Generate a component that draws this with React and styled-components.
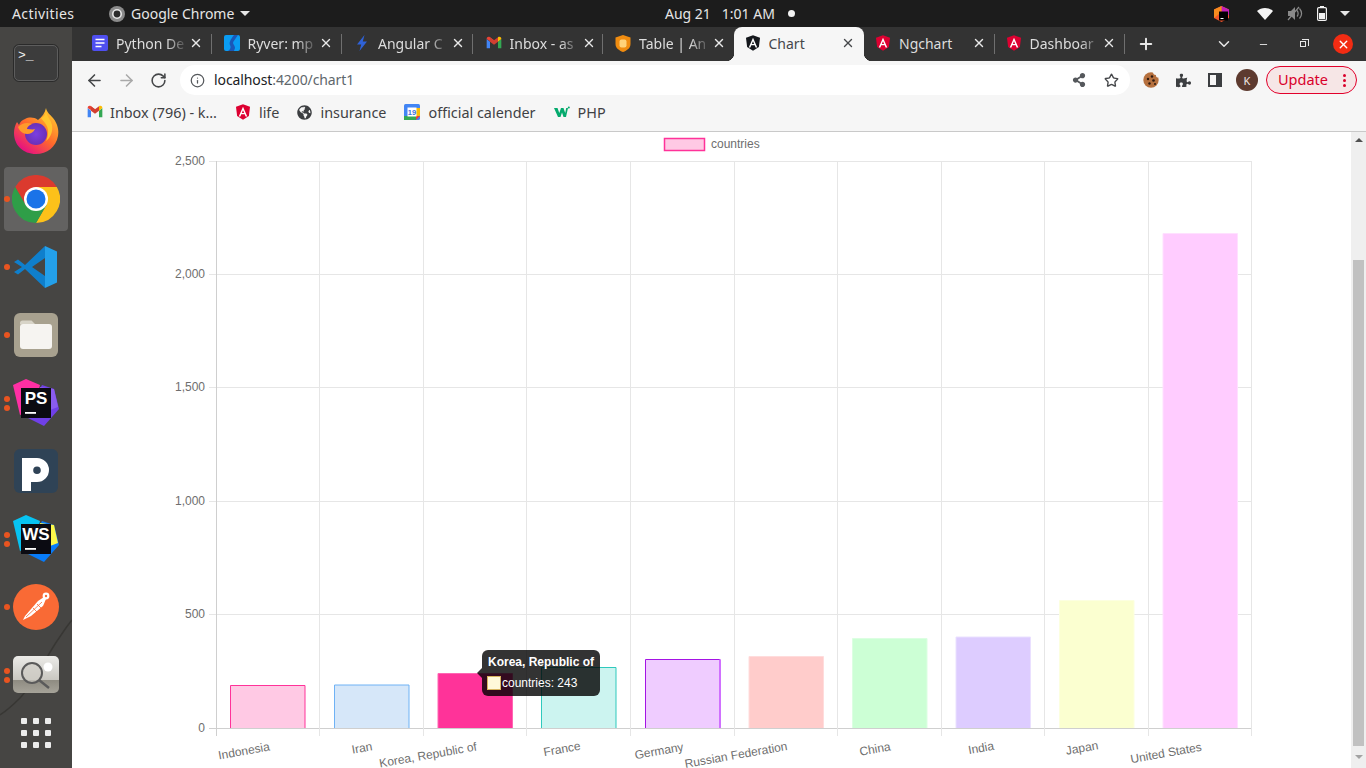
import React from 'react';
import styled, { createGlobalStyle } from 'styled-components';
import { ArrowLeft, ArrowRight, RotateCw, Info, Star, X, Plus, ChevronDown, Minus } from 'lucide-react';
import { FaGlobeAmericas, FaPuzzlePiece, FaShareAlt } from 'react-icons/fa';

const Global = createGlobalStyle`
  html, body { margin: 0; padding: 0; height: 100%; overflow: hidden; background: #fff; }
  * { box-sizing: border-box; }
  body { font-family: "Noto Sans", sans-serif; }
`;

const Screen = styled.div`
  width: 1366px;
  height: 768px;
  display: flex;
  flex-direction: column;
  overflow: hidden;
`;

/* gnome top bar */
const TopBar = styled.div`
  height: 27px;
  flex: none;
  background: #1c1c1c;
  color: #e6e6e6;
  display: grid;
  grid-template-columns: 97px 556px 200px 1fr;
  align-items: center;
  padding-left: 12px;
  font-size: 14px;
`;
const TopItem = styled.div`
  display: flex;
  align-items: center;
  gap: ${(p) => p.$gap || 0}px;
  letter-spacing: ${(p) => p.$track || 0}px;
  white-space: nowrap;
`;
const TopTray = styled.div`
  display: flex;
  align-items: center;
  padding-left: 348px;
`;
const TrayIcon = styled.span`
  display: flex;
  width: ${(p) => p.$w}px;
  margin-left: ${(p) => p.$ml || 0}px;
  justify-content: center;
`;
const Caret = styled.span`
  width: 0;
  height: 0;
  border-left: 5px solid transparent;
  border-right: 5px solid transparent;
  border-top: 5px solid #e6e6e6;
`;
const StatusDot = styled.span`
  width: 7px;
  height: 7px;
  border-radius: 50%;
  background: #f2f2f2;
  margin-left: 13px;
`;

const Body = styled.div`
  flex: 1;
  display: flex;
  min-height: 0;
`;

/* left dock */
const Dock = styled.div`
  position: relative;
  width: 72px;
  flex: none;
  background: #464543;
  padding-top: 2px;
  display: flex;
  flex-direction: column;
  overflow: hidden;
`;
const Wallpaper = styled.svg`
  position: absolute;
  left: 0;
  top: 0;
`;
const DockSlot = styled.div`
  position: relative;
  height: ${(p) => p.$h || 68}px;
  flex: none;
  display: flex;
  align-items: center;
  justify-content: center;
`;
const DockIcon = styled.span`
  position: relative;
  display: flex;
`;
const ActiveTile = styled.div`
  position: absolute;
  left: 4px;
  right: 4px;
  top: 2px;
  bottom: 2px;
  background: rgba(255, 255, 255, 0.16);
  border-radius: 4px;
`;
const Dots = styled.div`
  position: absolute;
  left: 4px;
  top: 0;
  bottom: 0;
  display: flex;
  flex-direction: column;
  justify-content: center;
  gap: 3px;
`;
const Dot = styled.span`
  width: 6px;
  height: 6px;
  border-radius: 50%;
  background: #e95420;
`;

const Browser = styled.div`
  flex: 1;
  min-width: 0;
  display: flex;
  flex-direction: column;
`;

/* tab strip */
const TabStrip = styled.div`
  height: 34px;
  flex: none;
  background: #333333;
  display: flex;
  padding-left: 9px;
`;
const Tab = styled.div`
  position: relative;
  width: 130.5px;
  flex: none;
  display: flex;
  align-items: center;
  padding: 0 ${(p) => p.$pr || 9}px 2px ${(p) => p.$pl || 11}px;
  gap: 8px;
  font-size: 14px;
  color: ${(p) => (p.$active ? '#45474a' : '#dddddd')};
  background: ${(p) => (p.$active ? '#f6f6f6' : 'transparent')};
  border-radius: ${(p) => (p.$active ? '8px 8px 0 0' : '0')};
  &::after {
    content: '';
    display: ${(p) => (p.$sep ? 'block' : 'none')};
    position: absolute;
    right: 0;
    top: 7px;
    height: 20px;
    width: 1px;
    background: #6f6f6f;
  }
`;
const Flare = styled.span`
  position: absolute;
  bottom: 0;
  ${(p) => (p.$side === 'left' ? 'left: -8px;' : 'right: -8px;')}
  width: 8px;
  height: 8px;
  background: radial-gradient(circle at ${(p) => (p.$side === 'left' ? '0 0' : '100% 0')}, transparent 8px, #f6f6f6 8.5px);
`;
const TabTitle = styled.span`
  flex: 1;
  min-width: 0;
  margin-right: -7px;
  overflow: hidden;
  white-space: nowrap;
  -webkit-mask-image: ${(p) => (p.$fade ? 'linear-gradient(to right, #000 70%, transparent 100%)' : 'none')};
  mask-image: ${(p) => (p.$fade ? 'linear-gradient(to right, #000 70%, transparent 100%)' : 'none')};
`;
const StripButton = styled.span`
  position: absolute;
  top: 0;
  height: 34px;
  left: ${(p) => p.$x}px;
  width: 30px;
  margin-left: -15px;
  display: flex;
  align-items: center;
  justify-content: center;
  color: #e8e8e8;
`;
const StripControls = styled.div`
  position: relative;
  flex: 1;
`;
const CloseDot = styled.span`
  width: 20px;
  height: 20px;
  border-radius: 50%;
  background: #f22c13;
  display: flex;
  align-items: center;
  justify-content: center;
  color: #fff;
`;
const RestoreIcon = styled.span`
  position: relative;
  width: 6px;
  height: 6px;
  border: 1px solid #e8e8e8;
  &::before {
    content: '';
    position: absolute;
    left: 0px;
    top: -3px;
    width: 6px;
    height: 6px;
    border: 1px solid #e8e8e8;
    border-left: 0;
    border-bottom: 0;
    transform: translate(1px, 0);
  }
`;

/* toolbar */
const Toolbar = styled.div`
  height: 34px;
  flex: none;
  background: #f6f6f6;
  display: flex;
  align-items: flex-start;
  padding-top: 4px;
`;
const NavButton = styled.span`
  width: 32px;
  height: 30px;
  flex: none;
  display: flex;
  align-items: center;
  justify-content: center;
  color: ${(p) => (p.$off ? '#a9a9a9' : '#444648')};
`;
const NavGroup = styled.div`
  display: flex;
  padding-left: 6px;
  padding-bottom: 1px;
  width: 108px;
`;
const Omnibox = styled.div`
  width: 950px;
  height: 30px;
  flex: none;
  background: #fff;
  border-radius: 15px;
  display: flex;
  align-items: center;
  padding: 0 3px 0 10px;
  font-size: 14px;
  color: #202124;
`;
const Url = styled.span`
  margin-left: 9px;
  margin-bottom: 2px;
  flex: 1;
  letter-spacing: -0.1px;
  & > em { font-style: normal; color: #60676c; }
`;
const Actions = styled.div`
  display: flex;
  align-items: center;
  width: 227px;
  height: 30px;
  padding-left: 5px;
`;
const Avatar = styled.span`
  width: 22px;
  height: 22px;
  border-radius: 50%;
  background: #5d3a2f;
  color: #f0e8e4;
  font-size: 11px;
  display: flex;
  align-items: center;
  justify-content: center;
  margin: 0 8px 0 5px;
`;
const UpdatePill = styled.span`
  width: 91px;
  height: 28px;
  border: 1px solid #e2002b;
  border-radius: 14px;
  background: #f6e6e6;
  color: #d9002b;
  font-size: 14.5px;
  display: flex;
  align-items: center;
  padding: 0 0 2px 11px;
  gap: 15px;
`;
const MoreDots = styled.span`
  display: flex;
  flex-direction: column;
  gap: 2px;
  margin-top: 2px;
  & > i { width: 3px; height: 3px; border-radius: 50%; background: #d9002b; display: block; }
`;

/* bookmarks */
const Bookmarks = styled.div`
  height: 37px;
  flex: none;
  background: #f6f6f6;
  border-bottom: 1px solid #c9c9c9;
  display: flex;
  align-items: center;
  padding: 0 0 2px 15px;
  gap: 18px;
  font-size: 14.4px;
  color: #3f4144;
`;
const Bookmark = styled.span`
  display: flex;
  align-items: center;
  gap: ${(p) => p.$gap || 8}px;
  white-space: nowrap;
`;

/* page */
const Page = styled.div`
  position: relative;
  flex: 1;
  min-height: 0;
  display: flex;
  background: #fff;
`;
const ChartArea = styled.div`
  flex: 1;
  min-width: 0;
`;
const ChartSvg = styled.svg`
  display: block;
`;
const Tooltip = styled.div`
  position: absolute;
  left: 410px;
  top: 518px;
  width: 118px;
  height: 46px;
  background: rgba(0, 0, 0, 0.8);
  border-radius: 6px;
  color: #fff;
  font-family: "Liberation Sans", Arial, sans-serif;
  font-size: 12px;
  padding: 6px;
  &::before {
    content: '';
    position: absolute;
    left: -5px;
    top: 18px;
    border-top: 5px solid transparent;
    border-bottom: 5px solid transparent;
    border-right: 5px solid rgba(0, 0, 0, 0.8);
  }
`;
const TipTitle = styled.div`
  font-weight: bold;
  line-height: 12px;
  margin-bottom: 8px;
  white-space: nowrap;
`;
const TipRow = styled.div`
  display: flex;
  align-items: center;
  line-height: 14px;
  white-space: nowrap;
  gap: 1px;
  margin-left: -1px;
`;
const TipSwatch = styled.span`
  width: 14px;
  height: 14px;
  background: #fff8d9;
  border: 1px solid #d8b45e;
`;
const ScrollBar = styled.div`
  width: 15px;
  flex: none;
  background: #efefef;
  display: flex;
  flex-direction: column;
  align-items: center;
  padding-top: 6px;
`;
const ScrollArrow = styled.span`
  width: 0;
  height: 0;
  border-left: 4px solid transparent;
  border-right: 4px solid transparent;
  ${(p) => (p.$down ? 'border-top: 4px solid #a3a3a3; margin-top: 9px;' : 'border-bottom: 4px solid #505050;')}
`;
const ScrollThumb = styled.span`
  width: 11px;
  height: 486px;
  margin-top: 118px;
  background: #c1c1c1;
`;

/* ---- icons ---- */
const AngularShield = ({ bg = '#dd0031', size = 16 }) => (
  <svg width={size} height={size} viewBox="0 0 24 24">
    <path d="M12 .5 1.5 4.2l1.7 13.9L12 23.5l8.8-5.4 1.7-13.9z" fill={bg} />
    <path fillRule="evenodd" d="M12 4 5.6 18.6h2.500l1.300-3.200h5.200l1.300 3.200h2.500zm-1.700 9.400L12 9.200l1.700 4.200z" fill="#fff" />
  </svg>
);
const GmailIcon = ({ size = 16 }) => (
  <svg width={size} height={size} viewBox="0 0 24 24">
    <path d="M1 6v14h5V10z" fill="#4285f4" />
    <path d="M18 10v10h5V6z" fill="#34a853" />
    <path d="M1 6c0-3 3-4 5-2.500l6 4.500v5L1 6z" fill="#ea4335" />
    <path d="M6 3.500 12 8l6-4.500V10l-6 4.500L6 10z" fill="#d23f31" />
    <path d="M18 3.500c2-1.500 5-.5 5 2.500l-5 4z" fill="#fbbc04" />
  </svg>
);
const DocsIcon = () => (
  <svg width="16" height="16" viewBox="0 0 16 16">
    <rect width="16" height="16" rx="2" fill="#4f4ff0" />
    <path d="M3.500 4.500h9M3.500 8h9M3.500 11.500h6" stroke="#fff" strokeWidth="1.500" />
  </svg>
);
const RyverIcon = () => (
  <svg width="16" height="16" viewBox="0 0 16 16">
    <rect width="16" height="16" rx="2" fill="#0a9cf2" />
    <path d="M10 0h4l-4.500 6.500C8 9 11 10 11 13l-1 3H4c3-2 3-4 2-6C5 8 6 5 10 0z" fill="#1a57b8" />
  </svg>
);
const BoltIcon = () => (
  <svg width="16" height="16" viewBox="0 0 16 16">
    <path d="M10.500 0 3 9.500h4.200L5.500 16 13 6.500H8.800z" fill="#2f62d8" />
  </svg>
);
const TableShield = () => (
  <svg width="16" height="17" viewBox="0 0 16 17">
    <path d="M8 0 15.500 2.500V9c0 4-3.500 6.500-7.500 8C4 15.500.5 13 .5 9V2.500z" fill="#f08c10" />
    <rect x="4.500" y="4.500" width="7" height="8" rx="2" fill="#ffd27a" />
  </svg>
);

const WifiIcon = () => (
  <svg width="16" height="13" viewBox="0 0 16 13">
    <path d="M0 4C4.500 0 11.500 0 16 4L8 13z" fill="#f5f5f5" />
  </svg>
);
const VolumeIcon = () => (
  <svg width="16" height="15" viewBox="0 0 16 15" fill="none">
    <path d="M1 5h3l4-4v13l-4-4H1z" fill="#8a8a8a" />
    <path d="M10 4.500c1.500 1.500 1.500 4.500 0 6M12.500 2.500c2.500 3 2.500 7 0 10" stroke="#8a8a8a" strokeWidth="1.200" />
    <path d="M1 14 12 1" stroke="#8a8a8a" strokeWidth="1.200" />
  </svg>
);
const BatteryIcon = () => (
  <svg width="10" height="15" viewBox="0 0 10 15">
    <path d="M3 0h4v1.500H3z" fill="#f2f2f2" />
    <rect x=".6" y="1.600" width="8.800" height="12.800" rx="1.200" fill="none" stroke="#f2f2f2" strokeWidth="1.200" />
    <rect x="2" y="7" width="6" height="6" fill="#f2f2f2" />
  </svg>
);
const ToolboxIcon = () => (
  <svg width="15" height="16" viewBox="0 0 15 16">
    <path d="M7.500 0 15 3.500V12l-7.500 4L0 12V3.500z" fill="#f2552c" />
    <path d="M7.500 0 15 3.500V9L7.500 6z" fill="#c21fb8" />
    <path d="M0 3.500 7.500 0v6L0 12z" fill="#f78b1f" />
    <rect x="5" y="5.500" width="9" height="9" fill="#000" />
    <rect x="6.500" y="12" width="3" height="1" fill="#fff" />
  </svg>
);
const SmallChrome = () => (
  <svg width="16" height="16" viewBox="0 0 16 16">
    <circle cx="8" cy="8" r="8" fill="#8b8b8b" />
    <circle cx="8" cy="8" r="4.200" fill="#2b2b2b" stroke="#e8e8e8" strokeWidth="1.600" />
  </svg>
);
const CookieIcon = () => (
  <svg width="16" height="16" viewBox="0 0 16 16">
    <circle cx="8" cy="8" r="7.700" fill="#b5703e" />
    <path d="M10 0a3 3 0 0 0 3 3 2 2 0 0 0 2.500 2.500L16 2 12 0z" fill="#f6f6f6" />
    <g fill="#2e1a10">
      <circle cx="9" cy="4.500" r="1.200" />
      <circle cx="5" cy="7" r="1.200" />
      <circle cx="10.500" cy="8.500" r="1.300" />
      <circle cx="6.500" cy="11.500" r="1.200" />
      <circle cx="12" cy="12" r="1" />
    </g>
  </svg>
);
const SidePanelIcon = () => (
  <svg width="14" height="14" viewBox="0 0 14 14">
    <rect x="1" y="1" width="12" height="12" fill="none" stroke="#3c3e41" strokeWidth="2" />
    <rect x="8" y="1" width="5" height="12" fill="#3c3e41" />
  </svg>
);
const CalendarIcon = () => (
  <svg width="16" height="16" viewBox="0 0 16 16">
    <rect width="16" height="16" rx="1.500" fill="#4285f4" />
    <rect x="0" y="12" width="12" height="4" fill="#34a853" />
    <rect x="12" y="4" width="4" height="8" fill="#fbbc04" />
    <path d="M12 12h4l-4 4z" fill="#ea4335" />
    <rect x="3.500" y="3.500" width="9" height="9" fill="#fff" />
    <text x="8" y="11" fontSize="7.500" fontWeight="700" textAnchor="middle" fill="#3a6fd8" fontFamily="Liberation Sans, sans-serif">19</text>
  </svg>
);
const W3Icon = () => (
  <svg width="16" height="12" viewBox="0 0 16 12">
    <path d="M0 2h3.500l1.800 5L7 2h2.500l1.700 5 1-5H14l-2 9H9.500L8 6.500 6.500 11H4z" fill="#04aa6d" />
    <circle cx="14.800" cy="1.500" r="1" fill="#04aa6d" />
  </svg>
);

const TerminalDock = () => (
  <svg width="46" height="38" viewBox="0 0 46 38">
    <rect x=".7" y=".7" width="44.600" height="36.600" rx="5" fill="#3c3c3c" stroke="#262626" />
    <rect x="1.500" y="1.500" width="43" height="35" rx="4.500" fill="none" stroke="#5d5d5d" />
    <text x="5" y="15" fontSize="13" fill="#f0f0f0" fontFamily="Liberation Mono, monospace">&gt;_</text>
  </svg>
);
const FirefoxDock = () => (
  <svg width="46" height="48" viewBox="0 0 46 48">
    <defs>
      <linearGradient id="ff1" x1="0.800" y1="0.100" x2="0.200" y2="0.900">
        <stop offset="0" stopColor="#ffbd2e" />
        <stop offset="0.500" stopColor="#ff6a2b" />
        <stop offset="1" stopColor="#e6137f" />
      </linearGradient>
      <radialGradient id="ff2">
        <stop offset="0" stopColor="#7b3fe0" />
        <stop offset="1" stopColor="#6a30b8" />
      </radialGradient>
    </defs>
    <path d="M33 1c1 5 4 6 7 10 5 6 6 13 5 18-2 11-11 18-22 18C10 47 1 38 1 26c0-4 1-8 3-11l2 3c1-3 3-5 6-6 4-2 9-2 13 1 4-3 7-7 8-12z" fill="url(#ff1)" />
    <circle cx="23" cy="27" r="11" fill="url(#ff2)" />
    <path d="M5 20c4-4 9-5 14-3-3 1-5 3-5 5 3 0 6 1 8 0-2 5-8 6-12 4-2-1-4-3-5-6z" fill="#ff9a2b" />
    <path d="M33 5c1 4 5 8 6 13 1 6-1 12-6 16 3-6 3-13-1-18-1-2-3-3-4-5 3-1 4-3 5-6z" fill="#ffc52e" />
  </svg>
);
const ChromeDock = () => (
  <svg width="48" height="48" viewBox="0 0 48 48">
    <path d="M3.200 12A24 24 0 0 1 44.800 12H24L13.600 30z" fill="#db3a2e" />
    <path d="M44.800 12A24 24 0 0 1 24 48L34.400 30 24 12z" fill="#fcc11a" />
    <path d="M24 48A24 24 0 0 1 3.200 12L13.600 30h20.800z" fill="#2f9e48" />
    <circle cx="24" cy="24" r="12" fill="#fff" />
    <circle cx="24" cy="24" r="9.500" fill="#1a73e8" />
  </svg>
);
const VscodeDock = () => (
  <svg width="44" height="44" viewBox="0 0 44 44">
    <path d="M31 1 43 6.500v31L31 43z" fill="#24a0ea" />
    <path d="M31 1 11 20 4 14.500 0 17l8 5-8 5 4 2.500 7-5.500 20 19V31L18 22 31 13z" fill="#0f7fcc" />
  </svg>
);
const FilesDock = () => (
  <svg width="44" height="44" viewBox="0 0 44 44">
    <rect width="44" height="44" rx="6" fill="#a8a18f" />
    <path d="M6 10c0-1.500 1-2.500 2.500-2.500h9l4 4H6z" fill="#d8d4c8" />
    <rect x="6" y="11" width="32" height="25" rx="3" fill="#f6f4f1" />
  </svg>
);
const JetBrainsDock = ({ label, colors }) => (
  <svg width="48" height="48" viewBox="0 0 48 48">
    <path d="M30 6 42 10 47 30 32 47 14 38z" fill={colors[1]} />
    <path d="M28 8 42 10 46 28 30 34z" fill={colors[0]} />
    <path d="M1 6 14 0 28 6 22 30 8 36z" fill={colors[2]} />
    <rect x="9" y="9" width="30" height="30" fill="#0b0b12" />
    <text x="24" y="25" fontSize="17" fontWeight="700" textAnchor="middle" fill="#fff" fontFamily="Liberation Sans, sans-serif">{label}</text>
    <rect x="13" y="33" width="11" height="1.800" fill="#fff" />
  </svg>
);
const PushDock = () => (
  <svg width="44" height="44" viewBox="0 0 44 44">
    <rect width="44" height="44" rx="6" fill="#2f4356" />
    <path fillRule="evenodd" d="M8 9h15a12 12 0 0 1 0 24h-6v9H8zm15 8.500a3.800 3.800 0 1 0 0 7.600 3.800 3.800 0 0 0 0-7.600z" fill="#fff" />
  </svg>
);
const PostmanDock = () => (
  <svg width="46" height="46" viewBox="0 0 46 46">
    <circle cx="23" cy="23" r="23" fill="#f96a35" />
    <path d="M10 36l2-4 13-15 6-4 2 2-3 7-12 10z" fill="#fff" />
    <path d="M13 33 29 18M17 34 31 22M20 24 25 29M24 20 29 25" stroke="#f96a35" strokeWidth=".8" />
    <circle cx="33" cy="12" r="3.400" fill="#fff" />
    <circle cx="33" cy="12" r="1.200" fill="#f96a35" />
  </svg>
);
const LensDock = () => (
  <svg width="46" height="38" viewBox="0 0 46 38">
    <defs>
      <linearGradient id="lens" x1="0" y1="0" x2="0" y2="1">
        <stop offset="0" stopColor="#ecebe8" />
        <stop offset="0.650" stopColor="#c9c7c1" />
        <stop offset="0.660" stopColor="#8f8c82" />
        <stop offset="1" stopColor="#a6a399" />
      </linearGradient>
    </defs>
    <rect width="46" height="37" rx="5" fill="url(#lens)" />
    <circle cx="35" cy="11" r="4.500" fill="#fff" />
    <circle cx="19" cy="17" r="10" fill="#cfccc5" fillOpacity=".7" stroke="#5a5a5a" strokeWidth="2" />
    <path d="M26 24 36 32" stroke="#5a5a5a" strokeWidth="2.500" />
  </svg>
);
const GridDock = () => (
  <svg width="32" height="32" viewBox="0 0 32 32" fill="#ececec">
    {[0, 1, 2].flatMap((r) =>
      [0, 1, 2].map((c) => <rect key={`${r}${c}`} x={c * 12 + 1} y={r * 12 + 1} width="6" height="6" rx="1" />)
    )}
  </svg>
);

/* ---- data ---- */
const tabs = [
  { title: 'Python De', icon: <DocsIcon />, sep: true, fade: true },
  { title: 'Ryver: mp', icon: <RyverIcon />, sep: true, fade: true, pl: 12 },
  { title: 'Angular C', icon: <BoltIcon />, sep: true, fade: true, pl: 12, pr: 8 },
  { title: 'Inbox - as', icon: <GmailIcon />, sep: true, fade: true, pl: 13, pr: 7 },
  { title: 'Table | An', icon: <TableShield />, fade: true, pl: 12, pr: 8 },
  { title: 'Chart', icon: <AngularShield bg="#14171c" />, active: true },
  { title: 'Ngchart', icon: <AngularShield />, sep: true },
  { title: 'Dashboar', icon: <AngularShield />, sep: true, fade: true },
];

const dock = [
  { icon: <TerminalDock /> },
  { icon: <FirefoxDock /> },
  { icon: <ChromeDock />, dots: 1, active: true },
  { icon: <VscodeDock />, dots: 1 },
  { icon: <FilesDock />, dots: 1 },
  { icon: <JetBrainsDock label="PS" colors={['#8a5cf0', '#7040e8', '#ff2fa4']} />, dots: 2 },
  { icon: <PushDock /> },
  { icon: <JetBrainsDock label="WS" colors={['#fcf84a', '#087cfa', '#07c3f2']} />, dots: 2 },
  { icon: <PostmanDock />, dots: 1 },
  { icon: <LensDock />, dots: 2 },
];

const bars = [
  { label: 'Indonesia', x: 230.5, top: 685.5, fill: '#ffc9e4', line: '#ff3299', lx: 244, ly: 751 },
  { label: 'Iran', x: 334.5, top: 685, fill: '#d6e7f9', line: '#6fb2f5', lx: 362, ly: 748 },
  { label: 'Korea, Republic of', x: 438, top: 673.5, fill: '#ff3399', line: '#ff66b3', lx: 428, ly: 755 },
  { label: 'France', x: 541.5, top: 667.5, fill: '#ccf4f0', line: '#2fc9bd', lx: 562, ly: 749 },
  { label: 'Germany', x: 645.5, top: 659.5, fill: '#efccff', line: '#a414e4', side: '#d070ff', lx: 659, ly: 751 },
  { label: 'Russian Federation', x: 749, top: 656.5, fill: '#ffcccb', line: '#ffdcdc', lx: 736, ly: 755 },
  { label: 'China', x: 852.5, top: 638.5, fill: '#ccffd5', line: '#dcffe2', lx: 875, ly: 749 },
  { label: 'India', x: 956, top: 637, fill: '#ddccff', line: '#eae0ff', lx: 981, ly: 748 },
  { label: 'Japan', x: 1059.5, top: 600.5, fill: '#fbffd0', line: '#fcffe0', lx: 1082, ly: 748 },
  { label: 'United States', x: 1163, top: 233.5, fill: '#ffccff', line: '#ffe0ff', lx: 1166, ly: 753 },
];
const yTicks = [
  { y: 161.5, label: '2,500' },
  { y: 274.5, label: '2,000' },
  { y: 387.5, label: '1,500' },
  { y: 501.5, label: '1,000' },
  { y: 614.5, label: '500' },
  { y: 728.5, label: '0' },
];
const xLines = [216.5, 319.5, 423.5, 526.5, 630.5, 734.5, 837.5, 941.5, 1044.5, 1148.5, 1251.5];

const ChartText = styled.text`
  font-family: "Liberation Sans", Arial, sans-serif;
  font-size: 12px;
  fill: #6e6e6e;
`;

function BarChart() {
  return (
    <ChartSvg width="1279" height="636" viewBox="72 132 1279 636">
      <rect x="664.5" y="138.5" width="40" height="12" fill="#ffc9e4" stroke="#ff3299" strokeWidth="1.500" />
      <ChartText x="711" y="148">countries</ChartText>
      {yTicks.map((t, i) => (
        <g key={t.label}>
          <line x1="209" x2="1252" y1={t.y} y2={t.y} stroke={i === 5 ? '#cfcfcf' : '#e6e6e6'} />
          <ChartText x="205" y={t.y + 3.5} textAnchor="end">{t.label}</ChartText>
        </g>
      ))}
      {xLines.map((x, i) => (
        <line key={x} x1={x} x2={x} y1="161" y2="736" stroke={i === 0 ? '#cfcfcf' : '#e6e6e6'} />
      ))}
      {bars.map((b) => (
        <g key={b.label}>
          <rect x={b.x} y={b.top} width="74.500" height={728 - b.top} fill={b.fill} />
          <path d={`M${b.x} 728V${b.top}H${b.x + 74.5}V728`} fill="none" stroke={b.line} strokeWidth="1" />
          {b.side && <path d={`M${b.x + 74.5} ${b.top}V728`} stroke={b.side} strokeWidth="2" />}
          <ChartText
            x={b.lx}
            y={b.ly}
            textAnchor="middle"
            dominantBaseline="central"
            transform={`rotate(-10 ${b.lx} ${b.ly})`}
          >
            {b.label}
          </ChartText>
        </g>
      ))}
    </ChartSvg>
  );
}

export default function App() {
  return (
    <Screen>
      <Global />
      <TopBar>
        <TopItem $track={0.4}>Activities</TopItem>
        <TopItem $gap={6}>
          <SmallChrome />
          Google Chrome
          <Caret />
        </TopItem>
        <TopItem>
          Aug 21&nbsp;&nbsp;&nbsp;1:01 AM
          <StatusDot />
        </TopItem>
        <TopTray>
          <TrayIcon $w={16}><ToolboxIcon /></TrayIcon>
          <TrayIcon $w={36} $ml={18}><WifiIcon /></TrayIcon>
          <TrayIcon $w={24}><VolumeIcon /></TrayIcon>
          <TrayIcon $w={30}><BatteryIcon /></TrayIcon>
          <TrayIcon $w={16}><Caret /></TrayIcon>
        </TopTray>
      </TopBar>
      <Body>
        <Dock>
          <Wallpaper width="72" height="741" viewBox="0 0 72 741">
            <path d="M72 593C66 600 62 607 57 614 45 632 34 656 20 671 13 678 6 684 0 688" stroke="#383734" strokeWidth="1.500" fill="none" />
          </Wallpaper>
          {dock.map((d, i) => (
            <DockSlot key={i}>
              {d.active && <ActiveTile />}
              {d.dots && (
                <Dots>
                  {Array.from({ length: d.dots }, (_, k) => <Dot key={k} />)}
                </Dots>
              )}
              <DockIcon>{d.icon}</DockIcon>
            </DockSlot>
          ))}
          <DockSlot $h={48}><GridDock /></DockSlot>
        </Dock>
        <Browser>
          <TabStrip>
            {tabs.map((t) => (
              <Tab key={t.title} $active={t.active} $sep={t.sep} $pl={t.pl} $pr={t.pr}>
                {t.active && <Flare $side="left" />}
                {t.active && <Flare $side="right" />}
                {t.icon}
                <TabTitle $fade={t.fade}>{t.title}</TabTitle>
                <X size={14} strokeWidth={2.4} color={t.active ? '#45474a' : '#e8e8e8'} />
              </Tab>
            ))}
            <StripControls>
              <StripButton $x={21}><Plus size={18} strokeWidth={2.6} /></StripButton>
              <StripButton $x={99}><ChevronDown size={18} /></StripButton>
              <StripButton $x={138}><Minus size={11} /></StripButton>
              <StripButton $x={178}><RestoreIcon /></StripButton>
              <StripButton $x={218}>
                <CloseDot><X size={13} strokeWidth={2.6} /></CloseDot>
              </StripButton>
            </StripControls>
          </TabStrip>
          <Toolbar>
            <NavGroup>
              <NavButton><ArrowLeft size={19} strokeWidth={2} /></NavButton>
              <NavButton $off><ArrowRight size={19} strokeWidth={2} /></NavButton>
              <NavButton><RotateCw size={17} strokeWidth={2.2} /></NavButton>
            </NavGroup>
            <Omnibox>
              <Info size={15} color="#55585c" strokeWidth={2} />
              <Url>localhost<em>:4200/chart1</em></Url>
              <NavButton><FaShareAlt size={14} color="#55585c" /></NavButton>
              <NavButton><Star size={15} color="#45474a" strokeWidth={2.2} /></NavButton>
            </Omnibox>
            <Actions>
              <NavButton><CookieIcon /></NavButton>
              <NavButton><FaPuzzlePiece size={15} color="#3c3e41" /></NavButton>
              <NavButton><SidePanelIcon /></NavButton>
              <Avatar>K</Avatar>
              <UpdatePill>
                Update
                <MoreDots><i /><i /><i /></MoreDots>
              </UpdatePill>
            </Actions>
          </Toolbar>
          <Bookmarks>
            <Bookmark $gap={7}><GmailIcon />Inbox (796) - k…</Bookmark>
            <Bookmark><AngularShield />life</Bookmark>
            <Bookmark><FaGlobeAmericas size={15} color="#3c3e41" />insurance</Bookmark>
            <Bookmark><CalendarIcon />official calender</Bookmark>
            <Bookmark><W3Icon />PHP</Bookmark>
          </Bookmarks>
          <Page>
            <ChartArea><BarChart /></ChartArea>
            <Tooltip>
              <TipTitle>Korea, Republic of</TipTitle>
              <TipRow><TipSwatch />countries: 243</TipRow>
            </Tooltip>
            <ScrollBar>
              <ScrollArrow />
              <ScrollThumb />
              <ScrollArrow $down />
            </ScrollBar>
          </Page>
        </Browser>
      </Body>
    </Screen>
  );
}
